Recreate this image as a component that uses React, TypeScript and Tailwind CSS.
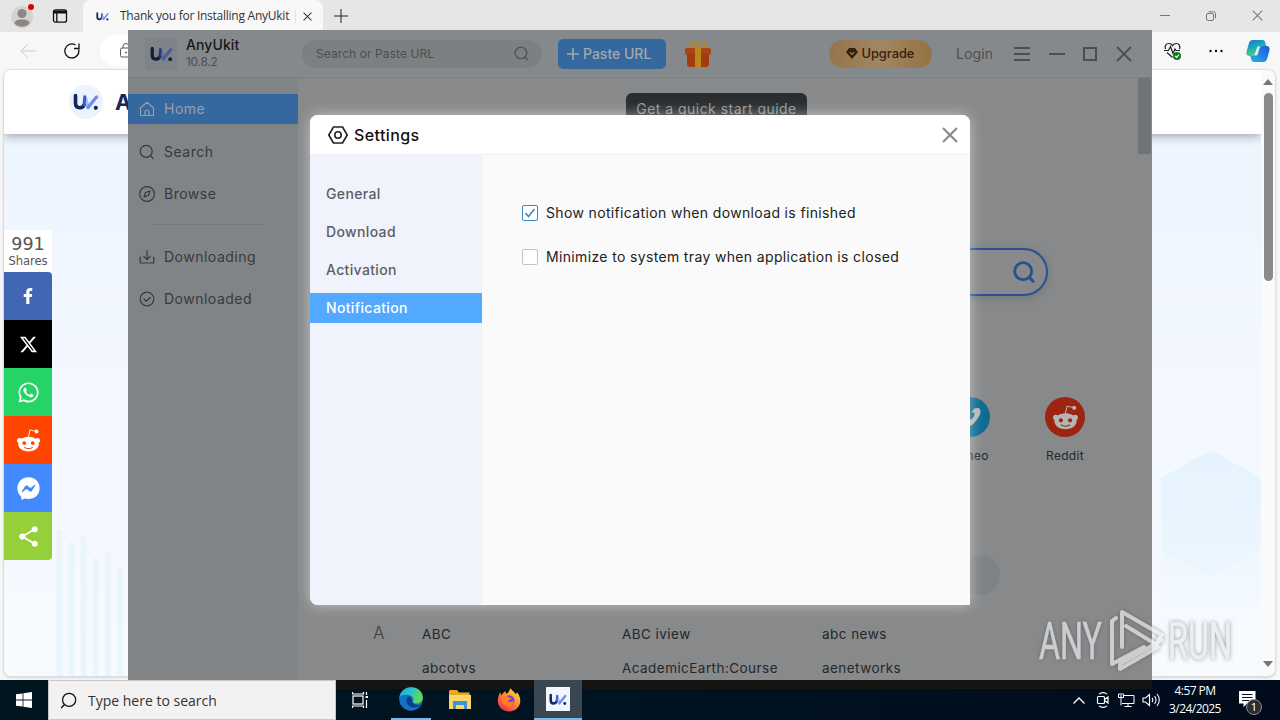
import type { ReactNode } from "react";
import {
  FaFacebookF,
  FaWhatsapp,
  FaRedditAlien,
  FaFacebookMessenger,
  FaVimeoV,
} from "react-icons/fa";
import { SiX } from "react-icons/si";
import { IoMdShare } from "react-icons/io";

const UkLogo = ({ className = "", dim = false }) => (
  <svg viewBox="0 0 26 18" className={className} fill="none" strokeLinecap="round">
    <path d="M11.800 3.500l3.400 11" stroke={dim ? "#5b6ba8" : "#a9bdfb"} strokeWidth="3.600" />
    <path d="M15 14.500L23.500 4" stroke={dim ? "#4a5ba0" : "#6f8cf3"} strokeWidth="3.400" />
    <path
      d="M2.500 2.500v7.500c0 3 1.800 4.700 4.500 4.700 2 0 3.300-1 4-2.700"
      stroke={dim ? "#141c38" : "#16265c"}
      strokeWidth="3.600"
    />
    <path d="M11 12l.8-8" stroke={dim ? "#2b3a74" : "#3e5bc4"} strokeWidth="3" />
    <circle cx="22.800" cy="14.800" r="2.100" fill={dim ? "#141c38" : "#16265c"} />
  </svg>
);

const SearchIcon = ({ className = "", width = 1.3 }) => (
  <svg viewBox="0 0 16 16" className={className} fill="none" stroke="currentColor" strokeWidth={width} strokeLinecap="round">
    <circle cx="7.400" cy="7.400" r="6.200" />
    <path d="M12 12l2.600 2.800" />
  </svg>
);

const CloseIcon = ({ className = "", width = 1.5 }) => (
  <svg viewBox="0 0 16 16" className={className} fill="none" stroke="currentColor" strokeWidth={width}>
    <path d="M1 1l14 14M15 1L1 15" />
  </svg>
);

const TabBar = () => (
  <div className="flex h-8 shrink-0 items-end bg-[#e6e6e6]">
    <div className="relative mb-[4px] ml-[11px] h-[22px] w-[22px] rounded-full bg-[#d5d3d0]">
      <svg viewBox="0 0 22 22" className="h-full w-full" fill="#8b8784">
        <circle cx="11" cy="7.500" r="4.600" />
        <path d="M3.500 17.500c0-3 3-4 7.500-4s7.500 1 7.500 4c-1.500 2-4.500 3.200-7.500 3.200s-6-1.200-7.500-3.200z" />
      </svg>
      <span className="absolute -top-0.5 -right-px h-[6px] w-[6px] rounded-full bg-[#e00000]" />
    </div>
    <svg viewBox="0 0 16 16" className="mb-2 ml-[19px] h-4 w-4" fill="none" stroke="#111">
      <rect x="1.500" y="1.800" width="13" height="12.400" rx="2" strokeWidth="1.300" />
      <path d="M1.500 4h13" strokeWidth="3" />
      <path d="M4.800 4v10" strokeWidth="1.300" />
    </svg>
    <div className="ml-[15px] flex h-8 w-[240px] items-center rounded-t-lg bg-[#f8f8f8] pl-[13px]">
      <UkLogo className="h-[9px] w-[13px]" />
      <div className="ml-[11px] w-[176px] font-['Open_Sans',sans-serif] text-[12px] tracking-[-0.250px] whitespace-nowrap text-[#333]">
        Thank you for Installing AnyUkit
        <span className="text-[#ddd]"> |</span>
      </div>
      <CloseIcon className="ml-[7px] h-[9px] w-[9px] text-[#333]" width={1.8} />
    </div>
    <svg viewBox="0 0 14 14" className="mb-[9px] ml-[11px] h-[14px] w-[14px]" stroke="#222">
      <path d="M7 0v14M0 7h14" />
    </svg>
    <div className="mr-[17px] mb-[11px] ml-auto flex items-center gap-[36px] text-[#777]">
      <span className="h-px w-[10px] bg-[#777]" />
      <svg viewBox="0 0 10 10" className="h-[10px] w-[10px]" fill="none" stroke="currentColor">
        <rect x="0.500" y="2.500" width="7" height="7" rx="1.500" />
        <path d="M2.500 .8h5a2 2 0 0 1 2 2v4.500" />
      </svg>
      <CloseIcon className="h-[11px] w-[11px]" width={1.5} />
    </div>
  </div>
);

const Toolbar = () => (
  <div className="flex h-[37px] shrink-0 items-center bg-[#f7f7f7]">
    <svg viewBox="0 0 16 14" className="ml-5 h-[14px] w-4" fill="none" stroke="#ccc">
      <path d="M16 7H1M7.500 .5L1 7l6.500 6.500" />
    </svg>
    <svg viewBox="0 0 16 16" className="ml-[28px] h-4 w-4" fill="none" stroke="#111" strokeWidth="1.300">
      <path d="M14.700 6.500A7 7 0 1 1 11.500 2M15 .5v5h-5" />
    </svg>
    <div className="ml-5 flex h-[31px] w-[1000px] items-center rounded-full bg-white pl-5">
      <svg viewBox="0 0 12 15" className="h-[15px] w-3" fill="none" stroke="#555">
        <rect x="0.500" y="5" width="11" height="9" rx="1.500" />
        <path d="M3 5V3.500a3 3 0 0 1 6 0V5" />
        <circle cx="6" cy="9.500" r=".6" fill="#555" />
      </svg>
    </div>
    <div className="ml-auto flex items-center pr-[10px]">
      <svg viewBox="0 0 18 18" className="h-[18px] w-[18px]" fill="none" stroke="#222" strokeWidth="1.200">
        <path d="M1.500 7C.5 4 2 1.500 4.800 1.500 6.500 1.500 8 2.500 8.500 3.600 9.200 2.500 10.500 1.500 12.300 1.500c2.700 0 4.200 2.500 3.200 5.500M0 8.500h4.500l2-4 2.500 7 2-4.500 1 1.500h4M3 10.500l5.500 5" />
        <circle cx="13" cy="14" r="4" fill="#117a1c" stroke="none" />
        <path d="M11.200 14l1.400 1.300 2.300-2.600" stroke="#fff" />
      </svg>
      <svg viewBox="0 0 14 4" className="ml-[27px] h-1 w-[14px]" fill="#111">
        <circle cx="1.500" cy="2" r="1.200" />
        <circle cx="7" cy="2" r="1.200" />
        <circle cx="12.500" cy="2" r="1.200" />
      </svg>
      <svg viewBox="0 0 24 24" className="ml-[23px] h-6 w-6">
        <defs>
          <linearGradient id="cpA" x1="0" y1="0" x2="0.400" y2="1">
            <stop offset="0" stopColor="#1878d8" />
            <stop offset="0.500" stopColor="#1ba9b8" />
            <stop offset="1" stopColor="#57d16d" />
          </linearGradient>
          <linearGradient id="cpB" x1="1" y1="0" x2="0" y2="1">
            <stop offset="0" stopColor="#1b56d8" />
            <stop offset="1" stopColor="#28b2f2" />
          </linearGradient>
        </defs>
        <path d="M12 1h4.500c2 0 2.500 1.500 3.100 3.500L20.200 7H17c-2 0-3 1-3.500 3l-1.300 4.300C11.600 16.200 10.500 17 9 17H3.500C.8 17 0 15 .6 12.500L2.800 4.500C3.500 2 4.700 1 7 1z" fill="url(#cpA)" />
        <path d="M17 7h3.500c2.700 0 3.500 2 2.900 4.500l-2.200 8c-.7 2.500-1.900 3.500-4.200 3.500H8c-2 0-2.500-1.500-3-3.500L4.300 17H9c1.500 0 2.600-.8 3.200-2.700L13.500 10C14 8 15 7 17 7z" fill="url(#cpB)" />
        <path d="M11.500 7.500h3c-1 .5-1.500 2-1.900 3.500l-1 3.400c-.3 1-.8 1.700-1.900 1.700H8.500z" fill="#eef8ff" />
      </svg>
    </div>
  </div>
);

const shares = [
  { color: "bg-[#4267b2] rounded-tr-sm", icon: <FaFacebookF size={16} /> },
  { color: "bg-black", icon: <SiX size={17} /> },
  { color: "bg-[#25d366]", icon: <FaWhatsapp size={23} /> },
  { color: "bg-[#ff4500]", icon: <FaRedditAlien size={25} /> },
  { color: "bg-[#448aff]", icon: <FaFacebookMessenger size={23} /> },
  { color: "bg-[#95d03a] rounded-br", icon: <IoMdShare size={25} /> },
];

const WebPage = () => (
  <div className="mr-1 ml-[3px] flex h-[608px] rounded-lg border border-[#dedede] bg-white shadow">
    <div className="flex min-w-0 grow flex-col overflow-hidden rounded-l-lg">
      <div className="z-10 flex h-[64px] shrink-0 items-center bg-white pl-[65px] shadow-[0_2px_10px_rgba(0,0,0,0.35)]">
        <span className="flex h-[34px] w-[34px] items-center justify-center rounded-full bg-[#eaf3fe]">
          <UkLogo className="h-[18px] w-[26px]" />
        </span>
        <span className="ml-[12px] font-['Inter',sans-serif] text-[22px] font-bold text-[#16265c]">A</span>
      </div>
      <div className="flex grow justify-between bg-gradient-to-b from-[#edf5ff] via-[#f4f8ff] to-[#f7fbff]">
        <div className="flex w-[124px] flex-col justify-between">
          <div className="mt-[96px] w-12">
            <div className="flex h-[42px] flex-col items-center bg-white pt-1 font-['DejaVu_Sans',sans-serif] text-[#555]">
              <span className="text-[17.500px] leading-[21px]">991</span>
              <span className="text-[11.500px] leading-[13px]">Shares</span>
            </div>
            {shares.map((s) => (
              <div key={s.color} className={`flex h-12 items-center justify-center text-white ${s.color}`}>
                {s.icon}
              </div>
            ))}
          </div>
          <svg viewBox="0 0 123 150" className="-mt-8 h-[150px] w-[124px] shrink-0" preserveAspectRatio="none" fill="#ebf5fe">
            <path d="M52 2h6v148h-6zM64 14h6v136h-6zM76 8h6v142h-6zM88 30h6v120h-6zM100 24h6v126h-6zM112 40h6v110h-6z" />
          </svg>
        </div>
        <svg viewBox="0 0 100 230" className="mt-auto h-[228px] w-[100px]">
          <defs>
            <linearGradient id="cube" x1="0" y1="0" x2="0" y2="1">
              <stop offset="0" stopColor="#e5f3fe" />
              <stop offset="0.800" stopColor="#f6fbff" />
              <stop offset="1" stopColor="#f7fbff" />
            </linearGradient>
          </defs>
          <path d="M50 0l50 28v202H0V28z" fill="url(#cube)" />
          <path d="M0 28l50 28 50-28v72L50 128 0 100z" fill="#e4f0ff" opacity=".25" />
        </svg>
      </div>
    </div>
    <div className="flex w-[14px] flex-col items-center rounded-r-lg bg-[#fafafa] py-[9px]">
      <span className="border-x-[5px] border-b-[6px] border-x-transparent border-b-[#777]" />
      <span className="mt-[8px] h-[188px] w-[9px] rounded-full bg-[#8a8a8a]" />
      <span className="mt-auto border-x-[5px] border-t-[6px] border-x-transparent border-t-[#777]" />
    </div>
  </div>
);

const AppHeader = () => (
  <div className="flex h-12 shrink-0 items-center border-b border-[#7d8082] bg-[#86898b] text-[#4c4f51]">
    <div className="ml-[17px] flex h-8 w-8 items-center justify-center bg-[#7d8388]">
      <UkLogo className="h-[16px] w-[23px]" dim />
    </div>
    <div className="ml-[9px] w-[116px] pb-px">
      <div className="text-[14px] leading-[17px] font-medium tracking-[0.1px] text-[#15181a]">AnyUkit</div>
      <div className="text-[12px] leading-[18px] tracking-[-0.3px]">10.8.2</div>
    </div>
    <div className="flex h-7 w-[240px] items-center justify-between rounded-full bg-[#7d8082] pr-[13px] pl-[14px] text-[12px] tracking-[0.08px]">
      <span className="pt-px">Search or Paste URL</span>
      <SearchIcon className="h-[15px] w-[15px]" />
    </div>
    <div className="ml-4 flex h-[30px] w-[108px] items-center rounded-[5px] bg-[#34689f] pl-[9px] text-[14px] font-medium text-[#a3a8ad]">
      <svg viewBox="0 0 12 12" className="mr-1 h-3 w-3" stroke="currentColor" strokeWidth="1.600">
        <path d="M6 0v12M0 6h12" />
      </svg>
      Paste URL
    </div>
    <svg viewBox="0 0 26 28" className="ml-[19px] h-7 w-[26px]">
      <path d="M13 8C9 0 5 1 6 5l2 4M13 8c4-8 8-7 7-3l-2 4" fill="none" stroke="#b98619" strokeWidth="2" />
      <rect y="8" width="26" height="7" rx="2" fill="#a84611" />
      <path d="M2 14h22v10a3 3 0 0 1-3 3H5a3 3 0 0 1-3-3z" fill="#a43b10" />
      <path d="M10 8h6v19h-6z" fill="#b98619" />
    </svg>
    <div className="mr-6 ml-auto flex h-7 w-[103px] items-center justify-center gap-[3px] rounded-full bg-gradient-to-r from-[#94754a] via-[#a18761] to-[#947244] text-[12.800px] font-medium text-[#352109]">
      <svg viewBox="0 0 12 11" className="h-[11px] w-3">
        <path d="M3 0h6l3 4-6 7-6-7z" fill="#352109" />
        <path d="M3.800 4.200L6 6.500l2.200-2.300" fill="none" stroke="#a18761" strokeWidth="1.200" />
      </svg>
      Upgrade
    </div>
    <span className="mr-5 w-[38px] text-[14px] tracking-[0.15px]">Login</span>
    <div className="mr-5 flex items-center gap-[18.700px]">
      <svg viewBox="0 0 16 14" className="h-[14px] w-4" stroke="currentColor" strokeWidth="1.800">
        <path d="M0 1h16M0 7h16M0 13h16" />
      </svg>
      <span className="h-[2px] w-4 bg-[#4c4f51]" />
      <span className="h-[14px] w-[14px] border-2 border-[#4c4f51]" />
      <CloseIcon className="h-4 w-4" width={1.8} />
    </div>
  </div>
);

const NavItem = ({ icon, label, active = false }: { icon: ReactNode; label: string; active?: boolean }) => (
  <div
    className={`flex h-[30px] shrink-0 items-center gap-[9px] pl-[11px] text-[14px] ${
      active ? "bg-[#34689f] text-[#96a0aa]" : "text-[#363a3d]"
    }`}
  >
    <svg viewBox="0 0 16 16" className="h-4 w-4" fill="none" stroke="currentColor" strokeWidth="1.200" strokeLinecap="round" strokeLinejoin="round">
      {icon}
    </svg>
    <span className="pb-0.5">{label}</span>
  </div>
);

const Sidebar = () => (
  <div className="flex w-[170px] shrink-0 flex-col bg-[#808487] pt-4 tracking-[0.5px]">
    <NavItem
      active
      label="Home"
      icon={<path d="M1.500 7L8 1.300 14.500 7v7.500h-13zM6 14.500V11a2 2 0 0 1 4 0v3.500" />}
    />
    <div className="h-[13px]" />
    <NavItem label="Search" icon={<path d="M13.200 7.300a6 6 0 1 1-12 0 6 6 0 0 1 12 0zM11.800 12l2.400 2.700" />} />
    <div className="h-3" />
    <NavItem
      label="Browse"
      icon={
        <>
          <circle cx="8" cy="8" r="7.400" />
          <path d="M11 5L9.500 9.500 5 11l1.500-4.500z" />
        </>
      }
    />
    <div className="mt-[15px] mb-[17px] ml-6 h-px w-[112px] shrink-0 bg-[#777a7c]" />
    <NavItem label="Downloading" icon={<path d="M1.200 8v6h13.600V8M8 1.500v8.500M4.800 7.500L8 10.500l3.200-3" />} />
    <div className="h-3" />
    <NavItem
      label="Downloaded"
      icon={
        <>
          <circle cx="8" cy="8" r="6.800" />
          <path d="M5 8l2.300 2.300L11.200 6.500" />
        </>
      }
    />
  </div>
);

const sites = [
  { name: "Vimeo", color: "bg-[#0e6b92]", icon: <FaVimeoV size={24} /> },
  { name: "Reddit", color: "bg-[#9c2410]", icon: <FaRedditAlien size={27} /> },
];

const siteRows = [
  ["A", "ABC", "ABC iview", "abc news"],
  ["", "abcotvs", "AcademicEarth:Course", "aenetworks"],
];

const AppMain = () => (
  <div className="flex grow bg-[#87898b]">
    <div className="flex w-[840px] flex-col">
      <div className="mt-[15px] ml-[328px] flex h-[32px] w-[181px] shrink-0 items-center justify-center rounded-md bg-[#2b2e30] pb-px text-[14px] tracking-[0.470px] text-[#929597]">
        Get a quick start guide
      </div>
      <div className="mt-[123px] ml-[90px] flex h-12 w-[660px] shrink-0 items-center justify-end rounded-full border-2 border-[#245390] pr-[11px] text-[#245390] shadow-[0_2px_8px_rgba(0,0,0,0.15)]">
        <SearchIcon className="h-[22px] w-[22px]" width={2.1} />
      </div>
      <div className="mt-[101px] mr-[33px] flex justify-end gap-[15px] text-[12px] tracking-[0.3px]">
        {sites.map((s) => (
          <div key={s.name} className="flex w-20 flex-col items-center text-[#24282a]">
            <span className={`flex h-10 w-10 items-center justify-center rounded-full text-[#b5b5b5] ${s.color}`}>
              {s.icon}
            </span>
            <span className="mt-[11px] leading-4">{s.name}</span>
          </div>
        ))}
      </div>
      <span className="mt-[91px] mr-[138px] ml-auto h-10 w-10 shrink-0 rounded-full bg-[#808385]" />
      <div className="mt-[22px] ml-[68px]">
        {siteRows.map((row) => (
          <div key={row[1]} className="grid h-[34px] grid-cols-[56px_200px_200px_200px] items-center text-[13.500px] tracking-[0.45px] text-[#24282a]">
            <span className="pl-[7px] text-[17px] font-light text-[#3c4042]">{row[0]}</span>
            <span>{row[1]}</span>
            <span>{row[2]}</span>
            <span>{row[3]}</span>
          </div>
        ))}
      </div>
    </div>
    <div className="w-[14px]">
      <div className="h-[76px] w-[13px] bg-[#717476]" />
    </div>
  </div>
);

const AppWindow = () => (
  <div className="absolute top-[30px] left-32 z-20 flex h-[650px] w-[1024px] flex-col overflow-hidden bg-[#87898b] font-['Inter',sans-serif]">
    <AppHeader />
    <div className="flex h-[602px] overflow-hidden">
      <Sidebar />
      <AppMain />
    </div>
  </div>
);

const tabs = ["General", "Download", "Activation", "Notification"];

const options = [
  { label: "Show notification when download is finished", checked: true },
  { label: "Minimize to system tray when application is closed", checked: false },
];

const SettingsDialog = () => (
  <div className="absolute top-[115px] left-[310px] z-30 flex h-[490px] w-[660px] flex-col rounded-t-lg rounded-bl-lg bg-[#fafafa] font-['Inter',sans-serif] shadow-[0_0_14px_rgba(255,255,255,0.5)]">
    <div className="flex h-10 shrink-0 items-center rounded-t-lg border-b border-[#efefef] bg-white pr-3 pl-[18px]">
      <svg viewBox="0 0 20 18" className="h-[18px] w-5" fill="none" stroke="#222" strokeWidth="1.600" strokeLinejoin="round">
        <path d="M5.500 1h9L19.200 9l-4.700 8h-9L.8 9z" />
        <circle cx="10" cy="9" r="3.200" />
      </svg>
      <span className="ml-1.5 text-[16px] font-medium tracking-[0.4px] text-[#111]">Settings</span>
      <CloseIcon className="ml-auto h-4 w-4 text-[#8a8a8a]" width={2.2} />
    </div>
    <div className="flex grow">
      <div className="flex w-[172px] flex-col gap-2 rounded-bl-lg bg-[#f0f3fb] pt-6">
        {tabs.map((tab) => (
          <div
            key={tab}
            className={`flex h-[30px] items-center pb-0.5 pl-4 text-[14px] font-medium tracking-[0.35px] ${
              tab === "Notification" ? "bg-[#53a8ff] text-white" : "text-[#5b5e66]"
            }`}
          >
            {tab}
          </div>
        ))}
      </div>
      <div className="flex flex-col gap-6 pt-12 pl-10 text-[14px] tracking-[0.350px] text-[#222]">
        {options.map((o) => (
          <div key={o.label} className="flex h-5 items-center gap-2">
            <span
              className={`flex h-4 w-4 items-center justify-center rounded-xs border bg-white ${
                o.checked ? "border-[#3a86c8]" : "border-[#c4c4c4]"
              }`}
            >
              {o.checked && (
                <svg viewBox="0 0 12 12" className="h-3 w-3" fill="none" stroke="#3a86c8" strokeWidth="1.500">
                  <path d="M1.500 6l3 3.500L10.500 2" />
                </svg>
              )}
            </span>
            <span className="pb-0.5">{o.label}</span>
          </div>
        ))}
      </div>
    </div>
  </div>
);

const Watermark = () => (
  <svg viewBox="0 0 220 66" className="absolute top-[608px] left-[1036px] z-40 h-[66px] w-[220px] opacity-70 drop-shadow-[0_0_2px_rgba(80,80,80,0.8)]" fill="none">
    <g fill="#e8eaec" stroke="#e8eaec" strokeWidth="0.600" fontFamily="Roboto, sans-serif" fontSize="51" fontWeight="400">
      <text x="3" y="51" textLength="63" lengthAdjust="spacingAndGlyphs">ANY</text>
      <text x="132" y="51" textLength="64" lengthAdjust="spacingAndGlyphs">RUN</text>
    </g>
    <g stroke="#e8eaec" strokeWidth="4" strokeLinejoin="round" strokeLinecap="round">
      <path d="M80 10l-4 3v43l32-17" />
      <path d="M86 39V4l40 23-4 5" />
      <path d="M90 18l31 19M126 32L84 56v5l38-22" />
    </g>
  </svg>
);

const EdgeIcon = () => (
  <svg viewBox="0 0 24 24" className="h-6 w-6">
    <defs>
      <linearGradient id="edgeA" x1="0" y1="0" x2="1" y2="0.400">
        <stop offset="0" stopColor="#1b9de0" />
        <stop offset="0.500" stopColor="#2bc3d2" />
        <stop offset="1" stopColor="#62d94e" />
      </linearGradient>
    </defs>
    <circle cx="12" cy="12" r="11.800" fill="#1470c4" />
    <path d="M.3 11C1 4.500 6 .2 12 .2c7 0 11.800 4.600 11.800 10 0 4-3 6.300-6.300 6.300-3 0-4-1.300-3.500-2.200.8-1.400.7-5-3.500-6C6 7.300 1.500 8 .3 11z" fill="url(#edgeA)" />
    <path d="M9 9.500c-3.500 3.500-1 11 6 11 3 0 5.300-1 7-3-3 1-8.500.7-9-3.500C12.800 12 12 9 9 9.500z" fill="#0d3f86" />
  </svg>
);

const ExplorerIcon = () => (
  <svg viewBox="0 0 22 20" className="h-5 w-[22px]">
    <path d="M0 1.500C0 .7.500 0 1.300 0H8l2 2.500h10.500V19H0z" fill="#e9a928" />
    <path d="M0 5h22v14H0z" fill="#fcd667" />
    <path d="M4 11h14v8h-3v-4H7v4H4z" fill="#3a94dc" />
  </svg>
);

const FirefoxIcon = () => (
  <svg viewBox="0 0 24 24" className="h-6 w-6">
    <defs>
      <linearGradient id="ffx" x1="0.900" y1="0" x2="0.200" y2="1">
        <stop offset="0" stopColor="#ffe14a" />
        <stop offset="0.500" stopColor="#ff8a26" />
        <stop offset="1" stopColor="#f0265c" />
      </linearGradient>
    </defs>
    <path d="M12 23.500C5.500 23.500.8 18.800.8 12.800.8 9 2 6.500 3.500 4.500l.8 3C5.300 5.500 7 4 8.500 3.200l.5 2.500c2 0 3-2.500 4.500-5.400 1.500 2.700 4 3.600 5.500 6l1-2c2.300 2.700 3.300 5.600 3.300 8.500 0 6-4.800 10.700-11.300 10.700z" fill="url(#ffx)" />
    <circle cx="12.200" cy="12.500" r="5.300" fill="#7542e0" />
    <path d="M5 9c2-1.500 5-1.500 6.500 0 1 1 2 .8 3 1-.5 2-3 1.500-3.500 3 1 2 4 1 6 0-.5 3.500-3 5.500-6 5.500C7.500 18.500 4 14 5 9z" fill="#ff8124" />
  </svg>
);

const Taskbar = () => (
  <div className="relative flex h-10 shrink-0 items-stretch bg-gradient-to-r from-[#00151f] via-[#001321] to-[#000b1c]">
    <div className="absolute top-0 left-32 h-[9px] w-[1024px] bg-[#151515]" />
    <div className="flex w-12 items-center justify-center">
      <svg viewBox="0 0 16 16" className="h-4 w-4" fill="#fff">
        <path d="M0 2.300L6.600 1.400v6.200H0zM7.400 1.300L16 0v7.600H7.400zM0 8.400h6.600v6.200L0 13.700zM7.400 8.400H16V16l-8.600-1.300z" />
      </svg>
    </div>
    <div className="relative flex w-[288px] items-center border border-[#c8c8c8] bg-[#f2f2f2] pl-[11px] font-['Open_Sans',sans-serif] text-[14px] text-[#333]">
      <SearchIcon className="mr-[11px] h-[17px] w-[17px] -scale-x-100 text-[#111]" width={1.2} />
      Type here to search
    </div>
    <div className="relative flex w-12 items-center justify-center">
      <svg viewBox="0 0 17 16" className="h-4 w-[17px]" fill="none" stroke="#fff" strokeWidth="1.200">
        <rect x="1" y="4" width="10" height="8" />
        <path d="M.5 0v2h11V0M.5 16v-2h11v2M14.500 0v3M14.500 8v8" />
        <path d="M13.500 5h2.500" strokeWidth="2" />
      </svg>
    </div>
    <div className="relative ml-[7px] flex w-10 items-center justify-center border-b-2 border-[#76b9ed]">
      <EdgeIcon />
    </div>
    <div className="relative ml-[5px] flex w-12 items-center justify-center">
      <ExplorerIcon />
    </div>
    <div className="relative flex w-[50px] items-center justify-center">
      <FirefoxIcon />
    </div>
    <div className="relative flex w-12 items-center justify-center border-b-2 border-[#76b9ed] bg-[#394751]">
      <span className="flex h-6 w-6 items-center justify-center bg-[#f1f6ff]">
        <UkLogo className="h-[13px] w-[18px]" />
      </span>
    </div>
    <div className="relative ml-auto flex items-center pr-[24px] text-white">
      <svg viewBox="0 0 12 7" className="h-[7px] w-3" fill="none" stroke="currentColor" strokeWidth="1.300">
        <path d="M.5 6.500L6 1l5.500 5.500" />
      </svg>
      <svg viewBox="0 0 14 16" className="ml-[11px] h-4 w-[14px]" fill="none" stroke="currentColor" strokeWidth="1.200">
        <rect x="1.500" y="4.500" width="7" height="7" rx="1" />
        <path d="M8.500 7.500L12 5v6L8.500 8.500M3 2.200c2-2 6-2 8 0M3 13.800c2 2 6 2 8 0" />
      </svg>
      <svg viewBox="0 0 17 15" className="ml-2 h-[15px] w-[17px]" fill="none" stroke="currentColor">
        <path d="M5 2.500h11v8H4M10 10.500v3M6.500 13.500h7M3 5v7.500" />
        <path d="M.5 1v3.500h5V1zM2 3h2" />
      </svg>
      <svg viewBox="0 0 18 14" className="ml-[7px] h-[14px] w-[18px]" fill="none" stroke="currentColor" strokeWidth="1.100">
        <path d="M1 5h2.500L7.500 1.500v11L3.500 9H1zM10 5c1 1 1 3 0 4M12.500 3c2 2.200 2 5.800 0 8M15 1c3 3.500 3 8.500 0 12" />
      </svg>
      <div className="ml-2 w-[54px] text-center font-['Open_Sans',sans-serif] text-[12px] leading-[18px] tracking-[-0.55px] whitespace-nowrap">
        <div>4:57 PM</div>
        <div>3/24/2025</div>
      </div>
      <div className="relative ml-[17px] h-[18px] w-[17px]">
        <svg viewBox="0 0 17 16" className="h-4 w-[17px]">
          <path d="M0 0h16.500v12.500H8L4.500 16v-3.500H0z" fill="#fff" />
          <path d="M3 3.500h10.500M3 6.500h10.500M3 9.500h7" stroke="#0a1420" />
        </svg>
        <span className="absolute top-[8px] left-[7px] flex h-4 w-4 items-center justify-center rounded-full border border-[#8d8f92] bg-[#2b2d31] text-[11px] text-white">
          1
        </span>
      </div>
    </div>
  </div>
);

const App = () => {
  return (
    <div className="relative flex h-[720px] w-[1280px] flex-col overflow-hidden bg-[#f7f7f7]">
      <div className="flex h-[680px] shrink-0 flex-col">
        <TabBar />
        <Toolbar />
        <WebPage />
      </div>
      <Taskbar />
      <AppWindow />
      <SettingsDialog />
      <Watermark />
    </div>
  );
};

export default App;
